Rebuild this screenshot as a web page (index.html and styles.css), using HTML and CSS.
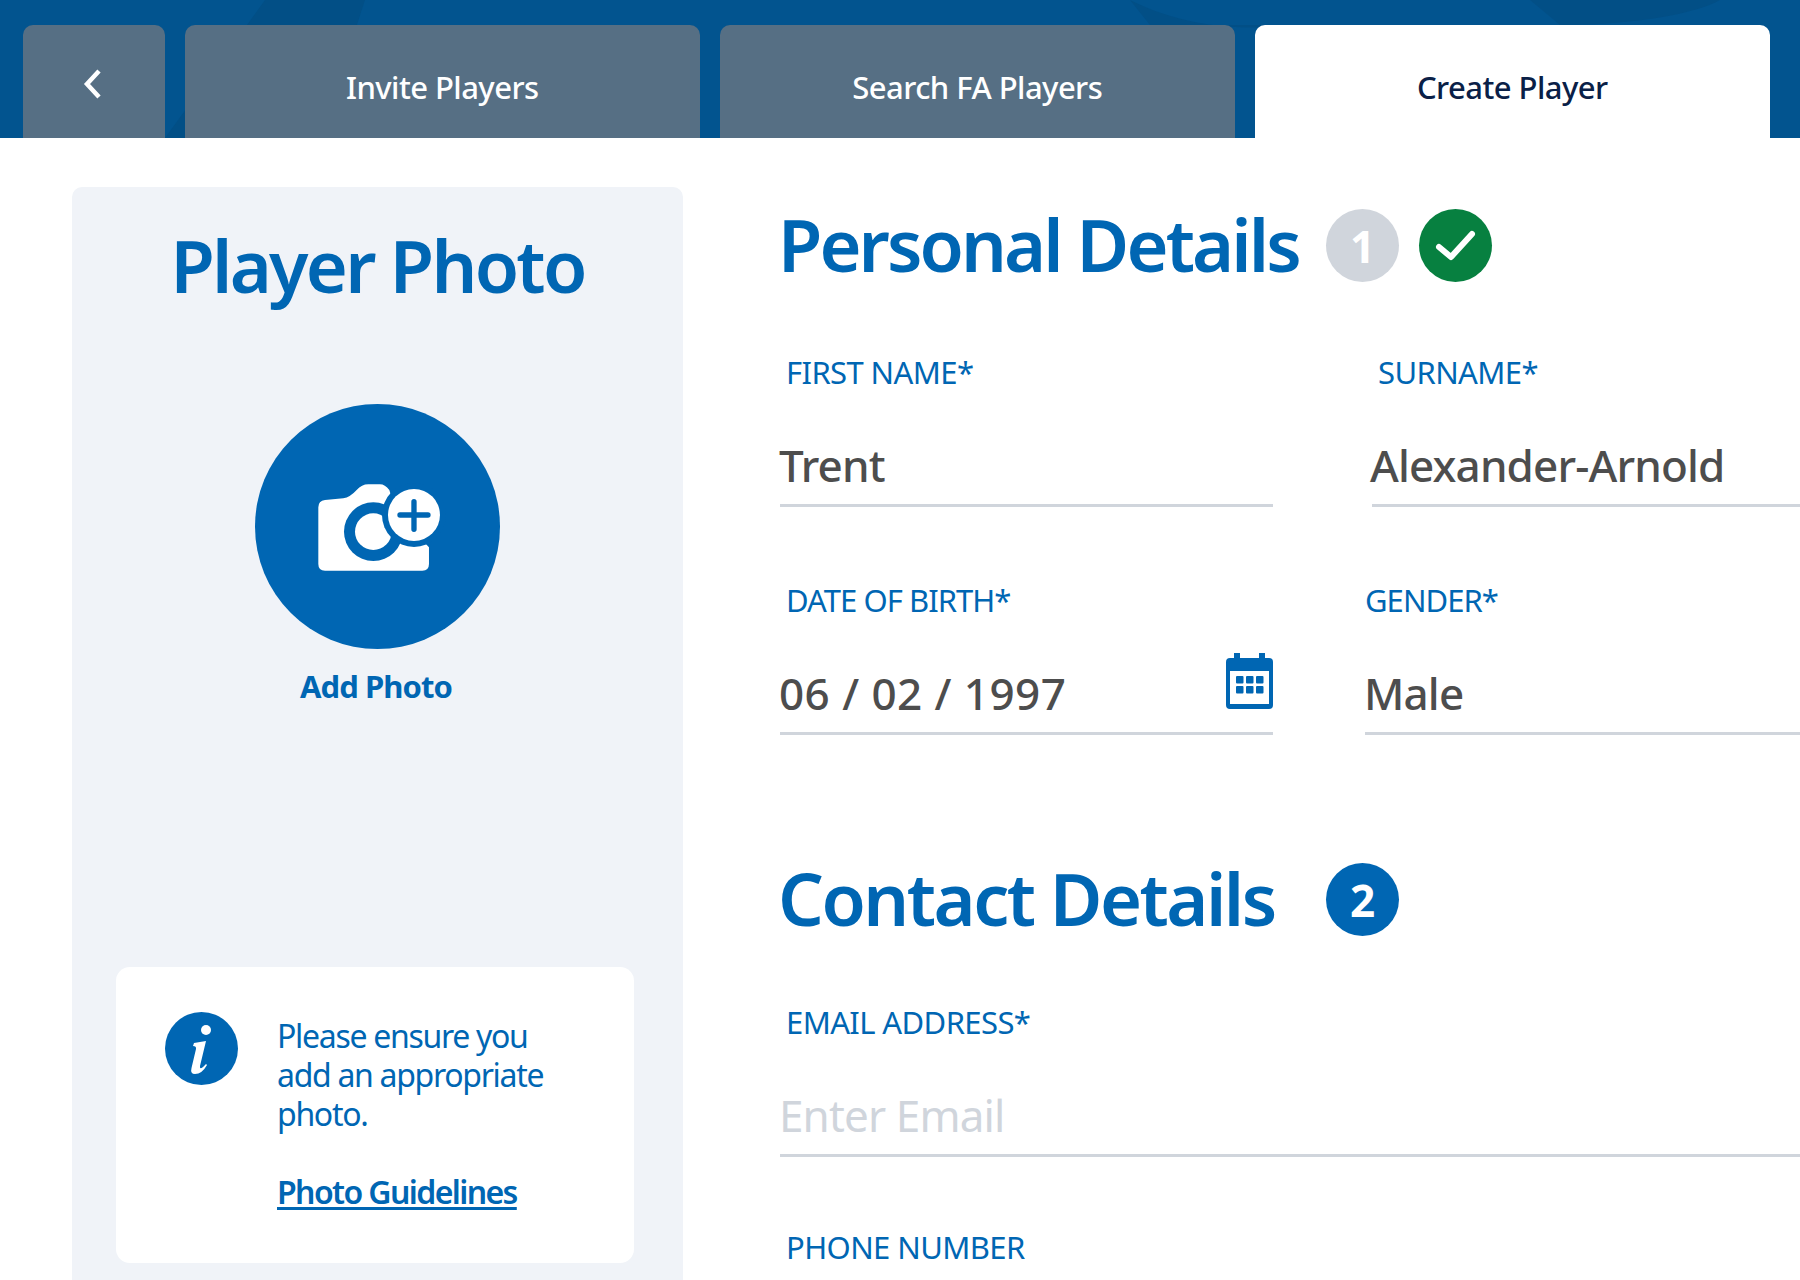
FILE: index.html
```html
<!DOCTYPE html>
<html lang="en">
<head>
<meta charset="utf-8">
<title>Create Player</title>
<link rel="stylesheet" href="styles.css">
</head>
<body>
<header class="topbar">
  <svg class="topbar-bg" viewBox="0 0 1800 138" preserveAspectRatio="none" aria-hidden="true">
    <path class="shade" d="M265 0 L365 0 L320 138 L165 138 Z"/>
    <path class="shade" d="M1130 0 C1190 30 1250 30 1300 25 L1236 25 L1150 25 Z"/>
    <path class="shade" d="M1530 0 L1720 0 C1700 12 1640 25 1560 25 Z"/>
  </svg>
  <nav class="tabs">
    <a class="tab tab-back"><svg class="chevron" viewBox="0 0 20 30"><path d="M16 2 L4 15 L16 28"/></svg></a>
    <a class="tab tab-wide">Invite Players</a>
    <a class="tab tab-wide">Search FA Players</a>
    <a class="tab tab-wide tab-active">Create Player</a>
  </nav>
</header>
<main class="content">
  <aside class="photo-panel">
    <h2 class="panel-title">Player Photo</h2>
    <button class="add-photo">
      <span class="add-circle">
        <svg class="camera" viewBox="0 0 245 245" aria-hidden="true">
          <g transform="translate(-25 -24) scale(.3333)">
            <path class="w" d="M265 382 Q265 362 285 360 L340 355 Q360 352 380 330 Q395 313 415 313 L450 313 Q465 313 478 330 L500 400 L597 502 L597 552 Q597 572 577 572 L285 572 Q265 572 265 552 Z"/>
            <circle class="b" cx="430" cy="455" r="88"/>
            <circle class="w" cx="430" cy="455" r="55"/>
            <circle class="b" cx="552" cy="405" r="96"/>
            <circle class="w" cx="552" cy="405" r="78"/>
            <path class="plus" d="M510 405 H594 M552 365 V448"/>
          </g>
        </svg>
      </span>
      <span class="add-label">Add Photo</span>
    </button>
    <div class="info-card">
      <svg class="info-icon" viewBox="0 0 73 73" aria-hidden="true">
        <circle class="b" cx="36.500" cy="36.500" r="36.500"/>
        <circle class="w" cx="41" cy="18" r="5"/>
        <path class="w" d="M29 31 L41 29 L35 54 Q34.500 58 38 55 L41 52 L42 53 Q37 62 30 62 Q25 62 26.500 56 L31 37 Q31.500 34 28 34 Z"/>
      </svg>
      <div class="info-text">
        <p>Please ensure you add an appropriate photo.</p>
        <a class="info-link">Photo Guidelines</a>
      </div>
    </div>
  </aside>
  <section class="form">
    <div class="section-head head-personal">
      <h1 class="section-title">Personal Details</h1>
      <span class="badge badge-done">1</span>
      <span class="badge badge-check"><svg viewBox="0 0 73 73" aria-hidden="true"><path d="M20 38 L32 48 L53 25"/></svg></span>
    </div>
    <div class="row row-names">
      <div class="field field-left">
        <label class="label">FIRST NAME*</label>
        <div class="value">Trent</div>
      </div>
      <div class="field field-surname">
        <label class="label">SURNAME*</label>
        <div class="value">Alexander-Arnold</div>
      </div>
    </div>
    <div class="row row-dob">
      <div class="field field-left">
        <label class="label label-tight">DATE OF BIRTH*</label>
        <div class="value value-date">06 / 02 / 1997
          <svg class="calendar" viewBox="0 0 47 56" aria-hidden="true">
            <path class="cal-fill" d="M8 0 H14 V5 H33 V0 H39 V5 H43 Q47 5 47 9 V52 Q47 56 43 56 H4 Q0 56 0 52 V9 Q0 5 4 5 H8 Z M4 18 V51 H43 V18 Z"/>
            <g class="cal-fill"><rect x="10" y="23" width="7.500" height="7.500" rx="1"/><rect x="20" y="23" width="7.500" height="7.500" rx="1"/><rect x="30" y="23" width="7.500" height="7.500" rx="1"/><rect x="10" y="33" width="7.500" height="7.500" rx="1"/><rect x="20" y="33" width="7.500" height="7.500" rx="1"/><rect x="30" y="33" width="7.500" height="7.500" rx="1"/></g>
          </svg>
        </div>
      </div>
      <div class="field field-gender">
        <label class="label label-tight">GENDER*</label>
        <div class="value">Male</div>
      </div>
    </div>
    <div class="section-head head-contact">
      <h1 class="section-title title-contact">Contact Details</h1>
      <span class="badge badge-current">2</span>
    </div>
    <div class="row row-email">
      <div class="field field-full">
        <label class="label">EMAIL ADDRESS*</label>
        <div class="value value-placeholder">Enter Email</div>
      </div>
    </div>
    <div class="row row-phone">
      <div class="field field-full">
        <label class="label">PHONE NUMBER</label>
      </div>
    </div>
  </section>
</main>
</body>
</html>
```

FILE: styles.css
```css
* { box-sizing: border-box; }
html, body { margin: 0; padding: 0; height: 1280px; overflow: hidden; background: #fff; }
body { font-family: "Noto Sans", "Liberation Sans", sans-serif; color: #0066b3; }
svg { display: block; }
.w { fill: #fff; }
.b { fill: #0066b3; }

.topbar { position: relative; height: 138px; padding: 25px 0 0 23px; background: #02548f; overflow: hidden; }
.topbar-bg { position: absolute; inset: 0; width: 100%; height: 100%; }
.shade { fill: #024f86; }
.tabs { position: relative; display: flex; gap: 19.500px; height: 113px; }
.tab { display: block; background: #566f84; border-radius: 10px 10px 0 0; color: #fff; font-size: 31px; font-weight: 500; letter-spacing: -0.550px; text-align: center; line-height: 38px; padding-top: 43px; }
.tab-back { width: 142px; padding-top: 44px; }
.tab-wide { width: 515.500px; }
.tab-active { background: #fff; color: #0a2047; }
.chevron { width: 20px; height: 30px; margin-left: 60px; }
.chevron path { fill: none; stroke: #fff; stroke-width: 4.500; }

.content { display: flex; align-items: stretch; height: 1142px; padding: 49px 0 0 72px; }
.photo-panel { flex: none; width: 611px; height: 1100px; padding-top: 33px; background: #f0f3f8; border-radius: 10px 10px 0 0; display: flex; flex-direction: column; align-items: center; }
.panel-title { margin: 0; font-size: 72px; line-height: 90px; font-weight: 600; letter-spacing: -2.700px; color: #0066b3; }
.add-photo { display: flex; flex-direction: column; align-items: center; margin-top: 94px; padding: 0; border: 0; background: none; font-family: inherit; color: inherit; }
.add-circle { display: block; width: 245px; height: 245px; border-radius: 50%; background: #0066b3; }
.camera { width: 245px; height: 245px; }
.plus { fill: none; stroke: #0066b3; stroke-width: 16; stroke-linecap: round; }
.add-label { margin-top: 17px; margin-right: 3px; font-size: 31px; line-height: 40px; font-weight: 700; letter-spacing: -0.950px; }

.info-card { display: flex; width: 518px; height: 296px; margin-top: 261px; margin-left: -5px; padding: 45px 0 0 49px; background: #fff; border-radius: 14px; }
.info-icon { flex: none; width: 73px; height: 73px; }
.info-text { margin-left: 39px; padding-top: 4px; width: 290px; font-size: 32px; line-height: 39px; letter-spacing: -1.300px; }
.info-text p { margin: 0 0 39px; }
.info-link { font-weight: 600; letter-spacing: -1.600px; text-decoration: underline; text-underline-offset: 3px; }

.form { flex: 1; min-width: 0; margin-left: 97px; }
.section-head { display: flex; align-items: center; height: 73px; }
.head-personal { margin-top: 22px; }
.section-title { flex: none; width: 548px; margin: 0 0 0 -2px; padding-bottom: 2px; font-size: 72px; line-height: 71px; font-weight: 600; letter-spacing: -2.900px; color: #0066b3; }
.title-contact { letter-spacing: -2.500px; }
.badge { flex: none; display: flex; align-items: center; justify-content: center; width: 73px; height: 73px; border-radius: 50%; color: #fff; font-size: 44px; font-weight: 700; }
.badge-done { background: #d0d5dc; }
.badge-check { margin-left: 20px; background: #078040; }
.badge-check svg { width: 73px; height: 73px; }
.badge-check path { fill: none; stroke: #fff; stroke-width: 6; stroke-linecap: round; stroke-linejoin: round; }
.head-contact { margin-top: 128px; }
.badge-current { background: #0066b3; }

.row { display: flex; }
.row-names { margin-top: 70px; }
.row-dob { margin-top: 73px; }
.row-email { margin-top: 66px; }
.row-phone { margin-top: 70px; }
.field { flex: none; min-width: 0; }
.field-left { width: 493px; }
.field-surname { flex: 1; margin-left: 99px; }
.field-gender { flex: 1; margin-left: 92px; }
.field-gender .label { padding-left: 0; }
.field-full { width: 100%; }
.label { display: block; padding-left: 6px; font-size: 31px; line-height: 40px; letter-spacing: -0.600px; color: #0066b3; font-weight: 400; }
.label-tight { letter-spacing: -0.950px; }
.value { position: relative; height: 115px; padding-top: 43px; border-bottom: 3px solid #d0d5dc; font-size: 44px; line-height: 60px; font-weight: 500; letter-spacing: -0.850px; color: #4d4d4d; text-indent: -1px; }
.value-date { letter-spacing: 0.450px; }
.value-placeholder { color: #d0d5dc; font-weight: 400; }
.field-surname .value { text-indent: -2px; }
.calendar { position: absolute; right: 0; top: 33px; width: 47px; height: 56px; }
.cal-fill { fill: #0066b3; fill-rule: evenodd; }
```
